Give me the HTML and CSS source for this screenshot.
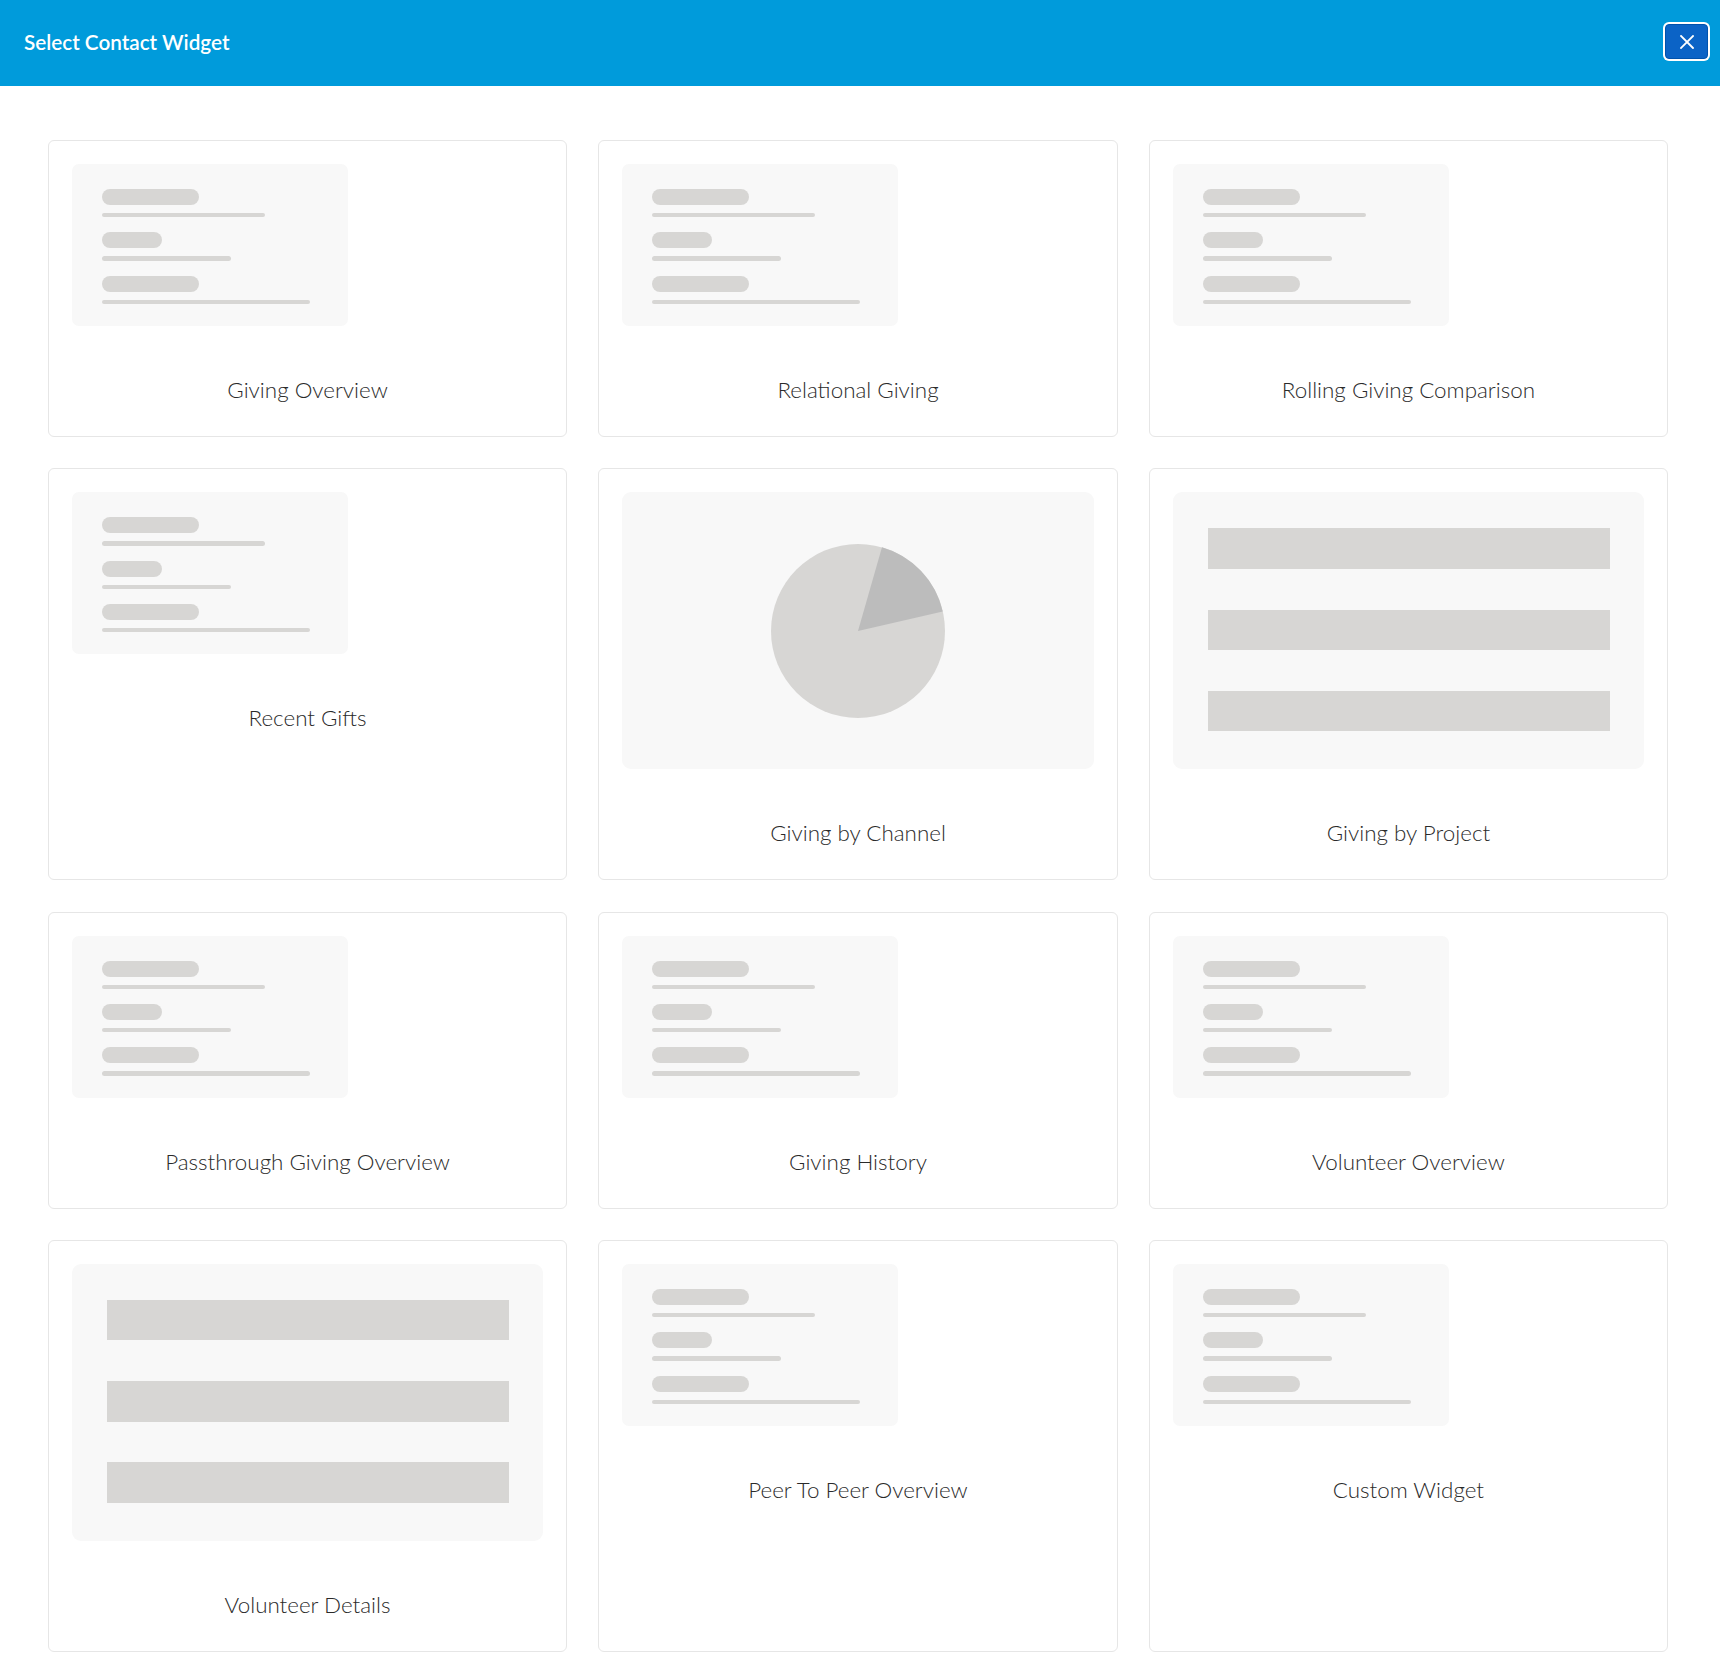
FILE: index.html
```html
<!DOCTYPE html>
<html lang="en">
<head>
<meta charset="utf-8">
<title>Select Contact Widget</title>
<link rel="stylesheet" href="styles.css">
</head>
<body>
<header class="modal-header">
  <h1 class="modal-title">Select Contact Widget</h1>
  <button class="close-btn" type="button" aria-label="Close">
    <svg width="14" height="14" viewBox="0 0 14 14" aria-hidden="true">
      <path d="M1 1 L13 13 M13 1 L1 13" stroke="#fff" stroke-width="1.8" stroke-linecap="square" fill="none"/>
    </svg>
  </button>
</header>

<main class="widget-grid">
  <div class="card">
    <div class="preview preview-list">
      <span class="pill pill-lg"></span><span class="rule rule-md"></span>
      <span class="pill pill-sm"></span><span class="rule rule-sm"></span>
      <span class="pill pill-lg"></span><span class="rule rule-lg"></span>
    </div>
    <div class="card-label">Giving Overview</div>
  </div>
  <div class="card">
    <div class="preview preview-list">
      <span class="pill pill-lg"></span><span class="rule rule-md"></span>
      <span class="pill pill-sm"></span><span class="rule rule-sm"></span>
      <span class="pill pill-lg"></span><span class="rule rule-lg"></span>
    </div>
    <div class="card-label">Relational Giving</div>
  </div>
  <div class="card">
    <div class="preview preview-list">
      <span class="pill pill-lg"></span><span class="rule rule-md"></span>
      <span class="pill pill-sm"></span><span class="rule rule-sm"></span>
      <span class="pill pill-lg"></span><span class="rule rule-lg"></span>
    </div>
    <div class="card-label">Rolling Giving Comparison</div>
  </div>

  <div class="card">
    <div class="preview preview-list">
      <span class="pill pill-lg"></span><span class="rule rule-md"></span>
      <span class="pill pill-sm"></span><span class="rule rule-sm"></span>
      <span class="pill pill-lg"></span><span class="rule rule-lg"></span>
    </div>
    <div class="card-label">Recent Gifts</div>
  </div>
  <div class="card">
    <div class="preview preview-wide preview-pie">
      <svg width="176" height="176" viewBox="-88 -88 176 176" aria-hidden="true">
        <circle cx="0" cy="0" r="87" fill="#d7d6d4"/>
        <path d="M0 0 L23.98 -83.63 A87 87 0 0 1 84.77 -19.57 Z" fill="#bcbcbc"/>
      </svg>
    </div>
    <div class="card-label">Giving by Channel</div>
  </div>
  <div class="card">
    <div class="preview preview-wide preview-bars">
      <span class="bar"></span><span class="bar"></span><span class="bar"></span>
    </div>
    <div class="card-label">Giving by Project</div>
  </div>

  <div class="card">
    <div class="preview preview-list">
      <span class="pill pill-lg"></span><span class="rule rule-md"></span>
      <span class="pill pill-sm"></span><span class="rule rule-sm"></span>
      <span class="pill pill-lg"></span><span class="rule rule-lg"></span>
    </div>
    <div class="card-label">Passthrough Giving Overview</div>
  </div>
  <div class="card">
    <div class="preview preview-list">
      <span class="pill pill-lg"></span><span class="rule rule-md"></span>
      <span class="pill pill-sm"></span><span class="rule rule-sm"></span>
      <span class="pill pill-lg"></span><span class="rule rule-lg"></span>
    </div>
    <div class="card-label">Giving History</div>
  </div>
  <div class="card">
    <div class="preview preview-list">
      <span class="pill pill-lg"></span><span class="rule rule-md"></span>
      <span class="pill pill-sm"></span><span class="rule rule-sm"></span>
      <span class="pill pill-lg"></span><span class="rule rule-lg"></span>
    </div>
    <div class="card-label">Volunteer Overview</div>
  </div>

  <div class="card">
    <div class="preview preview-wide preview-bars">
      <span class="bar"></span><span class="bar"></span><span class="bar"></span>
    </div>
    <div class="card-label">Volunteer Details</div>
  </div>
  <div class="card">
    <div class="preview preview-list">
      <span class="pill pill-lg"></span><span class="rule rule-md"></span>
      <span class="pill pill-sm"></span><span class="rule rule-sm"></span>
      <span class="pill pill-lg"></span><span class="rule rule-lg"></span>
    </div>
    <div class="card-label">Peer To Peer Overview</div>
  </div>
  <div class="card">
    <div class="preview preview-list">
      <span class="pill pill-lg"></span><span class="rule rule-md"></span>
      <span class="pill pill-sm"></span><span class="rule rule-sm"></span>
      <span class="pill pill-lg"></span><span class="rule rule-lg"></span>
    </div>
    <div class="card-label">Custom Widget</div>
  </div>
</main>
</body>
</html>
```

FILE: styles.css
```css
* {
  box-sizing: border-box;
}

html, body {
  margin: 0;
  padding: 0;
  background: #ffffff;
}

body {
  font-family: Lato, "Open Sans", "Liberation Sans", sans-serif;
  color: #333333;
}

/* ---------- Header bar ---------- */
.modal-header {
  height: 86px;
  background: #009bdb;
  display: flex;
  align-items: center;
  justify-content: space-between;
  padding: 0 10px 3px 24px;
}

.modal-title {
  margin: 0;
  font-size: 20.7px;
  font-weight: 600;
  color: #ffffff;
  letter-spacing: 0;
}

.close-btn {
  width: 43px;
  height: 35px;
  margin-right: 2px;
  padding: 0;
  display: flex;
  align-items: center;
  justify-content: center;
  background: #0b63c6;
  border: 1px solid #0052ad;
  border-radius: 4px;
  box-shadow: 0 0 0 2px #ffffff;
  cursor: pointer;
}

/* ---------- Widget grid ---------- */
.widget-grid {
  display: grid;
  grid-template-columns: repeat(3, 1fr);
  column-gap: 31.3px;
  row-gap: 31.3px;
  padding: 54px 52px 28px 48px;
}

.card {
  display: flex;
  flex-direction: column;
  align-items: center;
  border: 1px solid #e6e6e6;
  border-radius: 6px;
  padding: 23px;
  background: #ffffff;
}

.card-label {
  margin-top: 40px;
  line-height: 47px;
  font-size: 22.4px;
  font-weight: 300;
  color: #2a2a2a;
  text-align: center;
}

/* ---------- Preview thumbnails ---------- */
.preview {
  background: #f8f8f8;
  border-radius: 7px;
}

.preview-list {
  align-self: flex-start;
  width: 276px;
  height: 162px;
  display: flex;
  flex-direction: column;
  align-items: flex-start;
  padding: 25px 0 0 30px;
}

.pill {
  display: block;
  height: 16px;
  border-radius: 8px;
  background: #d7d6d4;
  margin-bottom: 8px;
}

.pill-lg { width: 97px; }
.pill-sm { width: 60px; }

.rule {
  display: block;
  height: 4.4px;
  border-radius: 3px;
  background: #d7d6d4;
  margin-bottom: 15px;
}

.rule-md { width: 163px; }
.rule-sm { width: 129px; }
.rule-lg { width: 208px; }

.preview-wide {
  align-self: stretch;
  height: 277px;
  border-radius: 9px;
}

.preview-pie {
  display: flex;
  align-items: center;
  justify-content: center;
}

.preview-bars {
  display: flex;
  flex-direction: column;
  justify-content: space-between;
  padding: 36px 34px 38px 35px;
}

.bar {
  display: block;
  height: 40.5px;
  background: #d7d6d4;
}
```
